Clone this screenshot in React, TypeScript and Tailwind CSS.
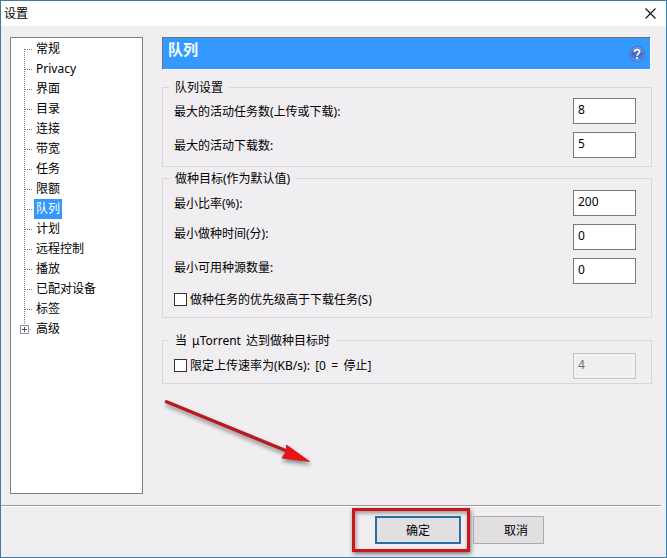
import type { ReactNode } from "react";

const pages = [
  "常规",
  "Privacy",
  "界面",
  "目录",
  "连接",
  "带宽",
  "任务",
  "限额",
  "队列",
  "计划",
  "远程控制",
  "播放",
  "已配对设备",
  "标签",
  "高级",
];

const TreeItem = ({ label, selected, last }: { label: string; selected: boolean; last: boolean }) => (
  <li className="flex h-5 items-center">
    <svg width="21" height="20" className="mr-[2px] shrink-0" shapeRendering="crispEdges">
      <path
        d={label === "常规" ? "M13.5 10V20" : last ? "M13.5 0V5" : "M13.5 0V20"}
        stroke="#808080"
        strokeDasharray="1 1"
      />
      <path d={last ? "M19 10.5H22" : "M14 10.5H22"} stroke="#808080" strokeDasharray="1 1" />
      {last && (
        <>
          <rect x="9.5" y="6.5" width="8" height="8" fill="#fbfbfc" stroke="#919191" />
          <path d="M11 10.5H16M13.5 8V13" stroke="#3c4f8c" />
        </>
      )}
    </svg>
    <span
      className={
        selected
          ? "h-5 bg-[#3399ff] px-[2px] leading-[19px] text-white"
          : "h-5 px-[2px] leading-[19px]"
      }
    >
      {label}
    </span>
  </li>
);

const Group = ({ title, className, children }: { title: string; className: string; children: ReactNode }) => (
  <section className={`w-[490px] border border-[#d9d7da] ${className}`}>
    <h3 className="-mt-[9px] ml-[6px] h-4 w-fit bg-[#f0eef1] px-[6px] leading-[18px] [word-spacing:2px]">
      {title}
    </h3>
    {children}
  </section>
);

const Field = ({ label, value, raised }: { label: string; value: string; raised?: boolean }) => (
  <div className="flex h-[26px] justify-between pr-[15px] pl-[11px]">
    <span className={raised ? "leading-[19px]" : "leading-[27px]"}>{label}</span>
    <div className="w-[63px] border border-[#7a7a7c] bg-white pl-1 leading-[21px]">{value}</div>
  </div>
);

const CheckBox = () => <span className="mr-[3px] h-[13px] w-[13px] shrink-0 border border-[#333] bg-white" />;

const HelpIcon = () => (
  <svg width="16" height="16" viewBox="0 0 16 16">
    <defs>
      <linearGradient id="help" x1="0" y1="0" x2="0" y2="1">
        <stop offset="0" stopColor="#6f8ed6" />
        <stop offset="0.5" stopColor="#3f68c4" />
        <stop offset="1" stopColor="#5a90e8" />
      </linearGradient>
    </defs>
    <circle cx="8" cy="8" r="7.4" fill="url(#help)" stroke="#3a5fae" strokeWidth="0.8" />
    <circle cx="8" cy="8" r="6.5" fill="none" stroke="#8fb0ee" strokeWidth="0.6" />
    <path
      d="M5.5 5.9C5.5 2.8 10.6 2.8 10.6 5.8C10.6 7.8 8.1 7.6 8.1 9.8"
      fill="none"
      stroke="#fff"
      strokeWidth="1.7"
    />
    <circle cx="8.1" cy="12" r="1.1" fill="#fff" />
  </svg>
);

const App = () => {
  return (
    <main className="relative flex h-[558px] w-[667px] flex-col overflow-hidden border border-[#3f7d9f] border-r-[#2f80bd] bg-[#f0eef1] font-['Noto_Sans','Noto_Sans_CJK_SC',sans-serif] text-[12px] text-black">
      <header className="flex h-[25px] shrink-0 items-center justify-between bg-white pr-[10px] pl-[3px]">
        <span className="leading-6">设置</span>
        <svg width="11" height="11" viewBox="0 0 11 11" stroke="#111" strokeWidth="1.1">
          <path d="M0.5 0.5L10.5 10.5M10.5 0.5L0.5 10.5" />
        </svg>
      </header>

      <div className="flex h-[479px] shrink-0 pt-[11px] pl-[9px]">
        <ul className="h-[457px] w-[133px] shrink-0 border border-[#828087] bg-white pt-px">
          {pages.map((page, i) => (
            <TreeItem key={page} label={page} selected={page === "队列"} last={i === pages.length - 1} />
          ))}
        </ul>

        <div className="ml-[19px] w-[490px]">
          <div className="flex h-[33px] w-[489px] justify-between border border-t-[#69747f] border-r-white border-b-white border-l-[#69747f] bg-[#3399ff] pr-[5px] pl-[5px]">
            <h2 className="text-[15px] leading-[22px] font-bold text-[#f4ffff]">队列</h2>
            <div className="pt-2">
              <HelpIcon />
            </div>
          </div>

          <Group title="队列设置" className="mt-[17px] h-[80px]">
            <div className="mt-[3px] flex flex-col gap-2">
              <Field label="最大的活动任务数(上传或下载):" value="8" />
              <Field label="最大的活动下载数:" value="5" />
            </div>
          </Group>

          <Group title="做种目标(作为默认值)" className="mt-[11px] h-[140px]">
            <div className="mt-1 flex flex-col gap-2">
              <Field label="最小比率(%):" value="200" />
              <Field label="最小做种时间(分):" value="0" raised />
              <Field label="最小可用种源数量:" value="0" raised />
            </div>
            <div className="mt-[7px] flex h-[17px] items-center pl-[11px]">
              <CheckBox />
              <span className="leading-4">做种任务的优先级高于下载任务(S)</span>
            </div>
          </Group>

          <Group title="当 μTorrent 达到做种目标时" className="mt-[22px] h-[44px]">
            <div className="mt-[5px] flex h-[26px] pr-[15px] pl-[11px]">
              <div className="flex h-[25px] grow items-center">
                <CheckBox />
                <span className="leading-4 [word-spacing:2.2px]">限定上传速率为(KB/s): [0 = 停止]</span>
              </div>
              <div className="w-[63px] border border-[#c8c6c9] p-px">
                <div className="h-full border border-[#f8f8f8] pl-[2px] leading-[18px] text-[#6d6d6d]">4</div>
              </div>
            </div>
          </Group>
        </div>
      </div>

      <footer className="mr-[5px] flex grow items-start border-t border-[#9d9c9f] pl-[351px] shadow-[inset_0_1px_0_#fff]">
        <div className="mt-[2px] h-[44px] w-[118px] shrink-0 border-[3px] border-[#c8181e] pt-[5px] pl-5 shadow-[1px_2px_4px_rgba(0,0,0,0.5),inset_1px_2px_4px_rgba(0,0,0,0.4)]">
          <button className="block h-7 w-[86px] border-2 border-[#2a6f9f] bg-[#e1dfe2] leading-[23px]">
            确定
          </button>
        </div>
        <button className="mt-[10px] ml-[3px] h-7 w-[71px] border border-[#adabae] bg-[#e1dfe2] pl-[15px] leading-[25px]">
          取消
        </button>
      </footer>

      {/* arrow pointing at the confirm button */}
      <svg className="absolute top-[390px] left-[155px]" width="170" height="90" viewBox="156 391 170 90">
        <g className="drop-shadow-[1px_3px_2px_rgba(0,0,0,0.45)]">
          <path d="M166.5 401.8L288 451.5" stroke="#b51c20" strokeWidth="3.4" strokeLinecap="round" />
          <path d="M286.5 445L309.5 461.5L282 458L286 452Z" fill="#ee1111" stroke="#bd1a1a" strokeWidth="0.8" />
        </g>
      </svg>
    </main>
  );
};

export default App;
